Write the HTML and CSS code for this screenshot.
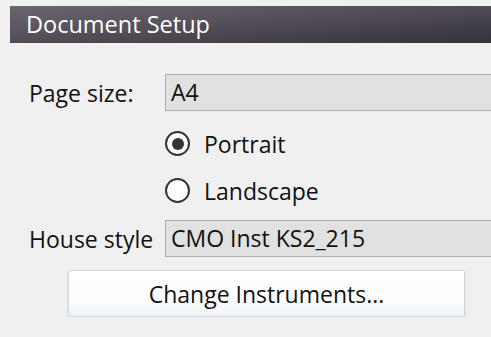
FILE: index.html
```html
<!DOCTYPE html>
<html lang="en">
<head>
  <meta charset="UTF-8">
  <title>Document Setup</title>
  <link rel="stylesheet" href="styles.css">
</head>
<body>
  <div class="dialog">
    <!-- Title -->
    <div class="titlebar">Document Setup</div>

    <div class="form">
      <div class="row">
        <span class="label">Page size:</span>
        <div class="field">A4</div>
      </div>

      <div class="row radio-row radio-first">
        <span class="label"></span>
        <label class="radio">
          <span class="radio-circle checked"></span>
          <span>Portrait</span>
        </label>
      </div>

      <div class="row radio-row">
        <span class="label"></span>
        <label class="radio">
          <span class="radio-circle"></span>
          <span>Landscape</span>
        </label>
      </div>

      <div class="row house-row">
        <span class="label">House style</span>
        <div class="field">CMO Inst KS2_215</div>
      </div>

      <button class="change-button">Change Instruments...</button>
    </div>
  </div>
</body>
</html>
```

FILE: styles.css
```css
* {
  margin: 0;
  padding: 0;
  box-sizing: border-box;
}

body {
  font-family: 'Open Sans', 'Noto Sans', sans-serif;
  font-size: 23px;
  color: #111;
  background: #f0f0f0;
  overflow: hidden;
}

.dialog {
  padding: 6px 0 0 10px;
}

/* Title bar */
.titlebar {
  height: 37px;
  line-height: 37px;
  padding-left: 16px;
  font-size: 23.5px;
  color: #fff;
  background: linear-gradient(to bottom right, #6c6671, #35313a);
}

/* Form */
.form {
  margin-top: 31px;
  padding-left: 19px;
}

.row {
  display: grid;
  grid-template-columns: 136px 1fr;
  align-items: center;
}

.field {
  height: 37px;
  line-height: 35px;
  padding-left: 5px;
  background: #e1e1e1;
  border: 1px solid #adadad;
  border-right: none;
  white-space: nowrap;
  overflow: hidden;
}

.radio-row {
  height: 47px;
}

.radio-first {
  margin-top: 9px;
}

.radio {
  display: flex;
  align-items: center;
  gap: 14px;
}

.radio-circle {
  width: 25px;
  height: 25px;
  border: 2px solid #333;
  border-radius: 50%;
  background: #fff;
  display: flex;
  align-items: center;
  justify-content: center;
}

.radio-circle.checked::after {
  content: '';
  width: 12px;
  height: 12px;
  border-radius: 50%;
  background: #333;
}

.house-row {
  margin-top: 6px;
}

/* Button */
.change-button {
  display: block;
  margin: 13px 0 0 39px;
  width: 397px;
  height: 47px;
  font-family: inherit;
  font-size: 23px;
  color: #111;
  background: linear-gradient(to bottom, #fff 0%, #fdfcff 70%, #eef3f8 100%);
  border: 1px solid #d3d3d8;
  border-radius: 2px;
  box-shadow: 0 1px 2px rgba(0, 0, 0, 0.12);
}
```
